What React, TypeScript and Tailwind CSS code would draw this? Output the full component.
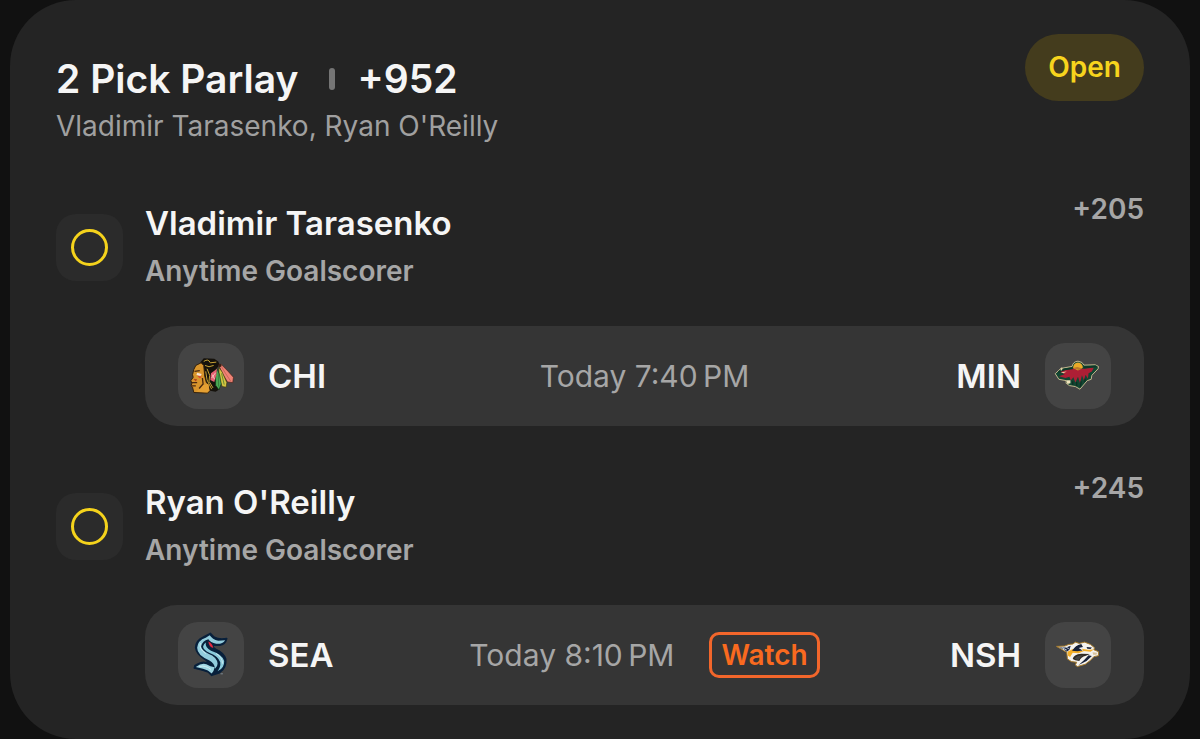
import { ReactNode } from "react";

interface Team {
  code: string;
  logo: ReactNode;
}

interface Leg {
  player: string;
  market: string;
  odds: string;
  time: string;
  watch?: boolean;
  away: Team;
  home: Team;
}

const ChicagoLogo = () => (
  <svg viewBox="20 20 200 200" className="size-full" aria-hidden="true">
    <path d="M88 78 L98 66 L130 68 L142 76 L146 86 L132 104 L140 130 L146 160 L134 168 L112 164 L88 120 Z" fill="#15120c" />
    <path d="M90 80 L98 88 L101 120 L106 140 L114 146 L117 164 L110 172 L68 170 L64 154 L60 150 L62 142 L59 134 L66 124 L64 116 L68 100 L74 88 Z" fill="#d8952c" stroke="#33200c" strokeWidth="3" />
    <path d="M92 148 L112 144 L115 164 L108 169 L74 168 L88 158 Z" fill="#e5a033" />
    <path d="M62 140 L78 140 M62 150 L74 150 M70 106 L86 104 M94 126 L96 144 L84 158" stroke="#4a2a10" strokeWidth="4" fill="none" />
    <path d="M66 128 L78 130 L74 137 Z" fill="#b8431f" />
    <path d="M78 110 L92 114 L88 120 L76 117 Z" fill="#f6e2d2" />
    <path d="M78 119 L92 122 L86 127 Z" fill="#dc3d31" />
    <path d="M98 76 Q112 66 118 80 L136 78 M102 88 L114 92 L128 88 M108 98 L116 118 L114 136 L126 156 M104 106 L108 132 L122 160" stroke="#c9a436" strokeWidth="3" fill="none" />
    <path d="M144 88 L150 84 L172 106 L188 124 L186 140 L170 138 L154 112 Z" fill="#ef8375" stroke="#4a2018" strokeWidth="2" />
    <path d="M152 92 L164 112 L180 136" stroke="#b8564a" strokeWidth="2" fill="none" />
    <path d="M144 94 L154 108 L168 140 L166 154 L154 152 L144 128 Z" fill="#d5c541" stroke="#3b3512" strokeWidth="2" />
    <path d="M138 98 L146 116 L151 144 L144 162 L134 148 L134 118 Z" fill="#4caa55" stroke="#133317" strokeWidth="2" />
    <path d="M142 112 L143 152 M152 112 L160 146" stroke="#2f6a34" strokeWidth="2" />
    <path d="M120 112 L138 98 L136 118 L130 138 L118 132 Z" fill="#e56072" />
    <path d="M122 126 L134 110 M124 116 L131 130" stroke="#f4c2bd" strokeWidth="3" />
    <circle cx="147" cy="88" r="5" fill="#3b2015" />
  </svg>
);

const MinnesotaLogo = () => (
  <svg viewBox="20 20 200 200" className="size-full" aria-hidden="true">
    <path
      d="M51 113 L68 97 L102 91 Q105 76 120 75 Q135 77 138 87 L172 86 L182 91 L181 98 L162 118 L160 130 L148 134 L126 160 L112 152 L94 149 L84 142 L84 134 L62 130 Z"
      fill="#124632"
      stroke="#c3b78e"
      strokeWidth="3"
      strokeLinejoin="round"
    />
    <path d="M64 106 L104 97 L140 98 L168 94 L162 106 L152 112 L150 128 L143 116 L138 134 L132 118 L126 142 L120 122 L112 140 L106 124 L98 134 L94 122 L82 126 L62 121 L80 115 Z" fill="#ad1f35" />
    <path d="M105 96 Q106 80 120 79 Q133 81 135 94 L120 103 Z" fill="#eaaa28" />
    <path d="M104 96 L118 93 L134 97 L122 102 Z" fill="#b9782a" />
    <path d="M60 108 L82 99 L104 97 M138 94 L176 91" stroke="#0d3828" strokeWidth="5" fill="none" />
    <path d="M68 109 L86 106 L76 112 Z" fill="#e6d5a8" />
    <path d="M71 95 L69 103" stroke="#dfcfa3" strokeWidth="5" />
    <path d="M84 133 L97 133 L97 142 L88 144 Z" fill="#f0e3bb" />
    <path d="M104 136 L104 147 M116 138 L116 150 M130 136 L127 153 M142 128 L140 138" stroke="#0c3022" strokeWidth="4" />
  </svg>
);

const SeattleLogo = () => (
  <svg viewBox="20 20 200 200" className="size-full" aria-hidden="true">
    <path
      d="M118 54 L130 66 Q144 74 168 70 Q164 88 146 91 L128 90 Q122 94 134 102 Q158 112 165 132 Q168 158 146 174 L122 182 L112 172 Q96 166 69 160 L71 152 Q92 138 106 143 L114 148 Q112 140 96 130 Q76 116 73 98 Q74 76 96 66 Z"
      fill="#08203b"
      stroke="#08203b"
      strokeWidth="4"
      strokeLinejoin="round"
    />
    <path d="M116 60 Q124 72 142 77 L163 75 Q154 88 136 86 Q118 82 112 72 Q94 76 90 94 Q92 106 112 116 Q138 126 140 146 Q140 156 132 162 Q132 146 114 136 Q78 120 78 98 Q80 76 104 68 Z" fill="#93cddd" />
    <path d="M104 82 Q102 98 120 107 Q154 118 160 138 Q161 160 140 169 Q150 156 148 142 Q142 124 116 114 Q96 104 96 94 Q98 86 104 82 Z" fill="#8acbdc" />
    <path d="M74 156 Q92 143 106 148 Q118 155 131 157 Q129 169 122 176 Q112 165 96 162 Z" fill="#9dd5e2" />
    <path d="M88 84 Q82 100 104 116 M136 116 Q154 126 155 146 M84 155 Q104 150 120 164" stroke="#cfecf1" strokeWidth="3" fill="none" />
    <path d="M112 79 Q124 84 127 99 Q114 96 112 79 Z" fill="#e22840" />
    <path d="M149 177 L156 177" stroke="#7e8b96" strokeWidth="3" />
  </svg>
);

const NashvilleLogo = () => (
  <svg viewBox="20 20 200 200" className="size-full" aria-hidden="true">
    <path
      d="M55 94 L80 93 L92 88 L104 87 L112 81 L124 85 L140 81 L158 88 L170 98 L168 104 L182 110 L182 122 L168 125 L158 136 L142 148 L118 155 L112 150 L116 142 L100 140 L88 132 L86 112 L76 106 L68 101 Z"
      fill="#f4f2ee"
      stroke="#a97c2a"
      strokeWidth="3"
      strokeLinejoin="round"
    />
    <path d="M62 97 L84 97 L98 92 L94 104 L86 110 L76 102 Z" fill="#182440" />
    <path d="M72 98 L86 105 M84 96 L92 101" stroke="#c7ced8" strokeWidth="3" />
    <path d="M88 110 L104 102 L126 108 L142 106 L122 115 L104 113 L96 126 L90 122 Z" fill="#f4ae27" />
    <path d="M102 107 L114 92 L130 87 L135 96 L122 99 L134 106 L118 109 Z" fill="#172139" />
    <path d="M110 87 L122 88 L106 99 L98 98 Z" fill="#f7f4ee" />
    <path d="M132 101 L150 104 L168 103 L158 110 L136 108 Z" fill="#f4ae27" />
    <path d="M146 96 L162 97 L158 102 L148 101 Z" fill="#172139" />
    <path d="M104 132 Q106 118 130 116 L156 117 L144 122 Q128 126 124 138 L112 136 Z" fill="#2f2a24" />
    <path d="M110 131 Q116 121 136 121 Q126 126 121 136 Z" fill="#444444" />
    <path d="M152 121 L162 123 L146 138 L122 150 L138 136 Z" fill="#172139" />
    <path d="M164 112 L178 113 L176 119 L166 119 Z" fill="#d9c39a" />
  </svg>
);

const legs: Leg[] = [
  {
    player: "Vladimir Tarasenko",
    market: "Anytime Goalscorer",
    odds: "+205",
    time: "Today 7:40\u202fPM",
    away: { code: "CHI", logo: <ChicagoLogo /> },
    home: { code: "MIN", logo: <MinnesotaLogo /> },
  },
  {
    player: "Ryan O'Reilly",
    market: "Anytime Goalscorer",
    odds: "+245",
    time: "Today 8:10\u202fPM",
    watch: true,
    away: { code: "SEA", logo: <SeattleLogo /> },
    home: { code: "NSH", logo: <NashvilleLogo /> },
  },
];

const TeamTile = ({ children }: { children: ReactNode }) => (
  <div className="size-[66px] shrink-0 rounded-[20px] bg-[#444444]">{children}</div>
);

const LegRow = ({ leg }: { leg: Leg }) => (
  <li>
    <div className="flex items-center">
      <div className="flex size-[67px] shrink-0 items-center justify-center rounded-[20px] bg-[#2b2b2b]">
        <div className="size-[37px] rounded-full border-3 border-[#f5d31c]" />
      </div>
      <div className="ml-[22px] flex-1 py-1">
        <h2 className="text-[33px] leading-[48px] font-semibold text-[#f5f5f5]">{leg.player}</h2>
        <p className="text-[28px] leading-[48px] font-semibold text-[#a6a6a6]">{leg.market}</p>
      </div>
      <span className="self-start text-[28px] leading-7 font-semibold text-[#a6a6a6]">{leg.odds}</span>
    </div>

    <div className="mt-[27px] ml-[89px] grid grid-cols-[1fr_auto_1fr] items-center rounded-[32px] bg-[#353535] px-[33px] py-[17px]">
      <div className="flex items-center gap-6">
        <TeamTile>{leg.away.logo}</TeamTile>
        <span className="text-[33px] leading-10 font-semibold text-[#f5f5f5]">{leg.away.code}</span>
      </div>
      <div className="flex items-center gap-[35px]">
        <span className="text-[30px] leading-10 whitespace-nowrap text-[#a6a6a6]">{leg.time}</span>
        {leg.watch && (
          <button className="rounded-[10px] border-3 border-[#f2662b] px-[9px] text-[28px] leading-10 font-semibold text-[#f96a1f]">
            Watch
          </button>
        )}
      </div>
      <div className="flex items-center justify-end gap-6">
        <span className="text-[33px] leading-10 font-semibold text-[#f5f5f5]">{leg.home.code}</span>
        <TeamTile>{leg.home.logo}</TeamTile>
      </div>
    </div>
  </li>
);

const App = () => {
  return (
    <main className="min-h-screen bg-[#111111] px-[10px] font-['Inter','Liberation_Sans',sans-serif]">
      <article className="rounded-[66px] bg-[#242424] px-[46px] py-[34px]">
        <header className="flex items-start justify-between">
          <div className="mt-[22px]">
            <div className="flex items-center text-[39px] leading-[46px] font-semibold text-[#f5f5f5]">
              <h1>2 Pick Parlay</h1>
              <span className="mr-[22px] ml-[31px] h-[22px] w-[6px] rounded-full bg-[#757575]" />
              <span>+952</span>
            </div>
            <p className="text-[28px] leading-[48px] text-[#a0a0a0]">Vladimir Tarasenko, Ryan O'Reilly</p>
          </div>
          <span className="rounded-full bg-[#443c1d] px-[23px] text-[28px] leading-[67px] font-semibold text-[#f7d41d]">
            Open
          </span>
        </header>

        <ul className="mt-[45px] space-y-12">
          {legs.map(leg => (
            <LegRow key={leg.player} leg={leg} />
          ))}
        </ul>
      </article>
    </main>
  );
};

export default App;
